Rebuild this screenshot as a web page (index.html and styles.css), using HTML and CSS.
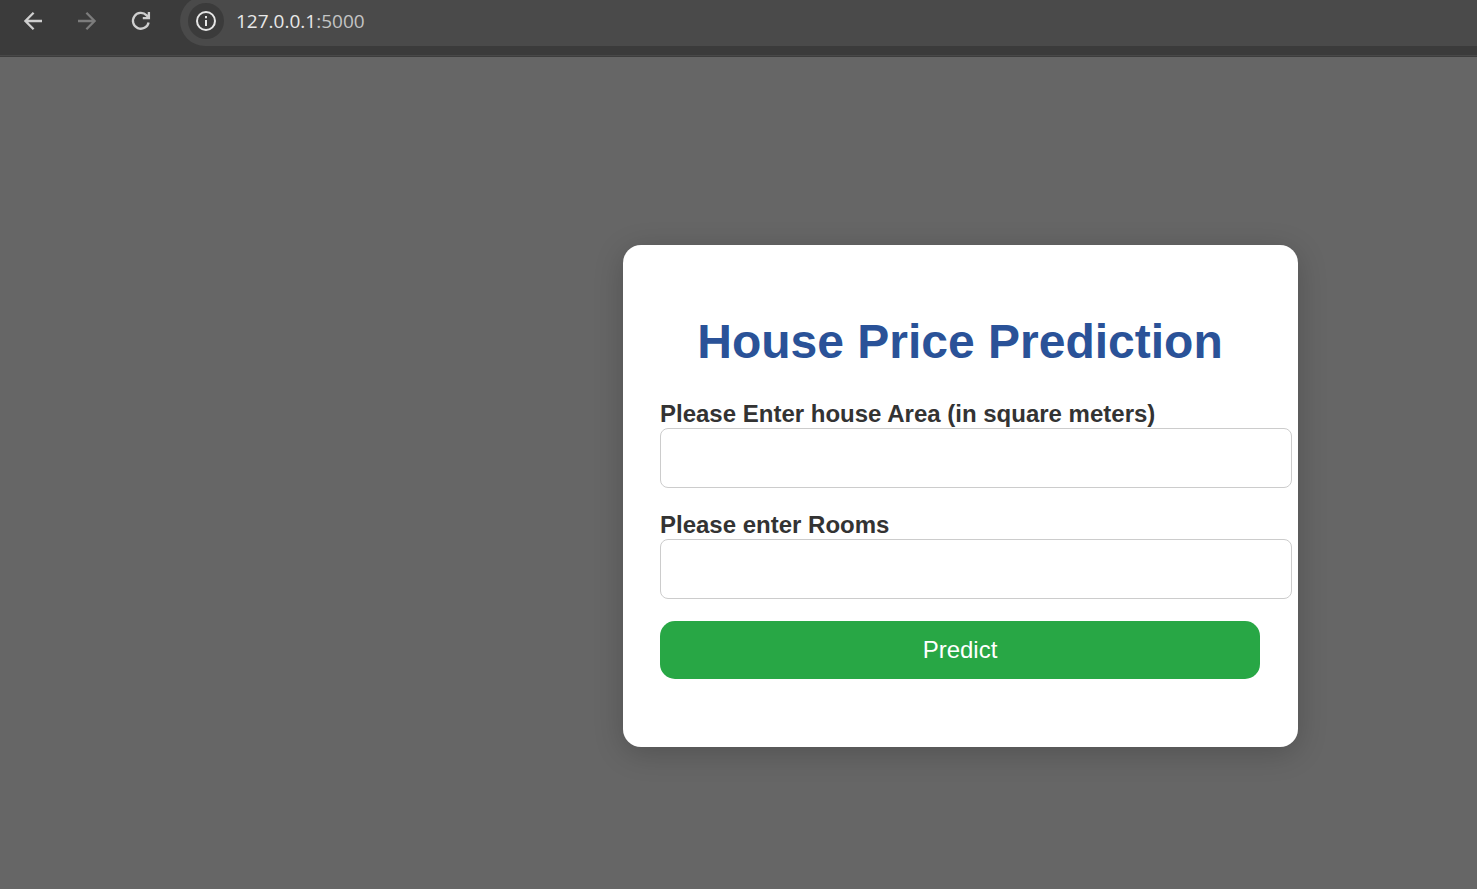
FILE: index.html
```html
<!DOCTYPE html>
<html lang="en">
<head>
<meta charset="utf-8">
<title>House Price Prediction</title>
<link rel="stylesheet" href="styles.css">
</head>
<body>
<header class="toolbar">
  <nav class="nav-buttons">
    <button class="nav-button" type="button" aria-label="Back">
      <svg viewBox="0 0 24 24" width="24" height="24"><path d="M21 12H4.6M12.6 3.8L4.4 12L12.6 20.2"/></svg>
    </button>
    <button class="nav-button nav-button-off" type="button" aria-label="Forward">
      <svg viewBox="0 0 24 24" width="24" height="24"><path d="M3 12H19.4M11.4 3.8L19.6 12L11.4 20.2"/></svg>
    </button>
    <button class="nav-button" type="button" aria-label="Reload">
      <svg viewBox="0 0 24 24" width="24" height="24"><path d="M19.6 13.4A7.9 7.9 0 1 1 17.6 6.4L19.6 8.6M19.9 3V9.1H13.8"/></svg>
    </button>
  </nav>
  <div class="omnibox">
    <button class="site-info" type="button" aria-label="View site information">
      <svg viewBox="0 0 24 24" width="24" height="24"><circle cx="12" cy="12" r="9"/><path d="M12 11V17M12 7V9.2"/></svg>
    </button>
    <span class="url">127.0.0.1<span class="port">:5000</span></span>
  </div>
</header>
<main class="page">
  <section class="card">
    <h1 class="title">House Price Prediction</h1>
    <form class="form">
      <label class="label" for="area">Please Enter house Area (in square meters)</label>
      <input class="field" id="area" name="area" type="text">
      <label class="label" for="rooms">Please enter Rooms</label>
      <input class="field" id="rooms" name="rooms" type="text">
      <button class="submit" type="button">Predict</button>
    </form>
  </section>
</main>
</body>
</html>
```

FILE: styles.css
```css
body {
  margin: 0;
  min-height: 100vh;
  display: flex;
  flex-direction: column;
  background: #666;
  font-family: "Liberation Sans", Arial, sans-serif;
}

button {
  border: 0;
  padding: 0;
  background: none;
}

.toolbar {
  display: flex;
  align-items: flex-start;
  height: 55px;
  overflow: hidden;
  background: #3b3b3b;
  border-bottom: 1px solid #484848;
  box-shadow: 0 1px 0 #3d3d3d;
  margin-bottom: 1px;
}

.nav-buttons {
  display: flex;
  gap: 30px;
  padding: 9px 27px 0 21px;
}

.nav-button {
  display: flex;
  color: #cfcfcf;
}

.nav-button-off {
  color: #7c7c7c;
}

svg {
  fill: none;
  stroke: currentColor;
  stroke-width: 2.3;
}

.omnibox {
  flex: 1;
  display: flex;
  align-items: center;
  gap: 12px;
  height: 50px;
  margin-top: -4px;
  padding-left: 8px;
  box-sizing: border-box;
  border-radius: 25px 0 0 25px;
  background: #4a4a4a;
}

.site-info {
  display: flex;
  align-items: center;
  justify-content: center;
  width: 36px;
  height: 36px;
  border-radius: 50%;
  background: #3b3b3b;
  color: #e6e6e6;
}

.site-info svg {
  stroke-width: 2;
}

.url {
  font: 19px/24px "Open Sans", "Noto Sans", sans-serif;
  color: #e8e8e8;
}

.port {
  color: #c4c4c4;
}

.page {
  flex: 1;
  display: flex;
  align-items: center;
  justify-content: center;
  padding: 46px 0 0 444px;
}

.card {
  width: 675px;
  box-sizing: border-box;
  padding: 69px 38px 68px 37px;
  border-radius: 18px;
  background: #fff;
  box-shadow: 0 6px 30px rgba(0, 0, 0, 0.2);
}

.title {
  margin: 0 0 29px;
  font-size: 48px;
  line-height: 56px;
  text-align: center;
  color: #2a5298;
}

.form {
  display: flex;
  flex-direction: column;
  align-items: flex-start;
}

.label {
  font-size: 24px;
  font-weight: bold;
  line-height: 29px;
  color: #333;
}

.field {
  width: 100%;
  height: 28px;
  margin: 0 0 22px;
  padding: 15px;
  border: 1px solid #ccc;
  border-radius: 8px;
  background: #fff;
  font: 24px/28px "Liberation Sans", Arial, sans-serif;
}

.submit {
  width: 100%;
  padding: 15px;
  border-radius: 15px;
  background: #28a745;
  color: #fff;
  font: 24px/28px "Liberation Sans", Arial, sans-serif;
}
```
